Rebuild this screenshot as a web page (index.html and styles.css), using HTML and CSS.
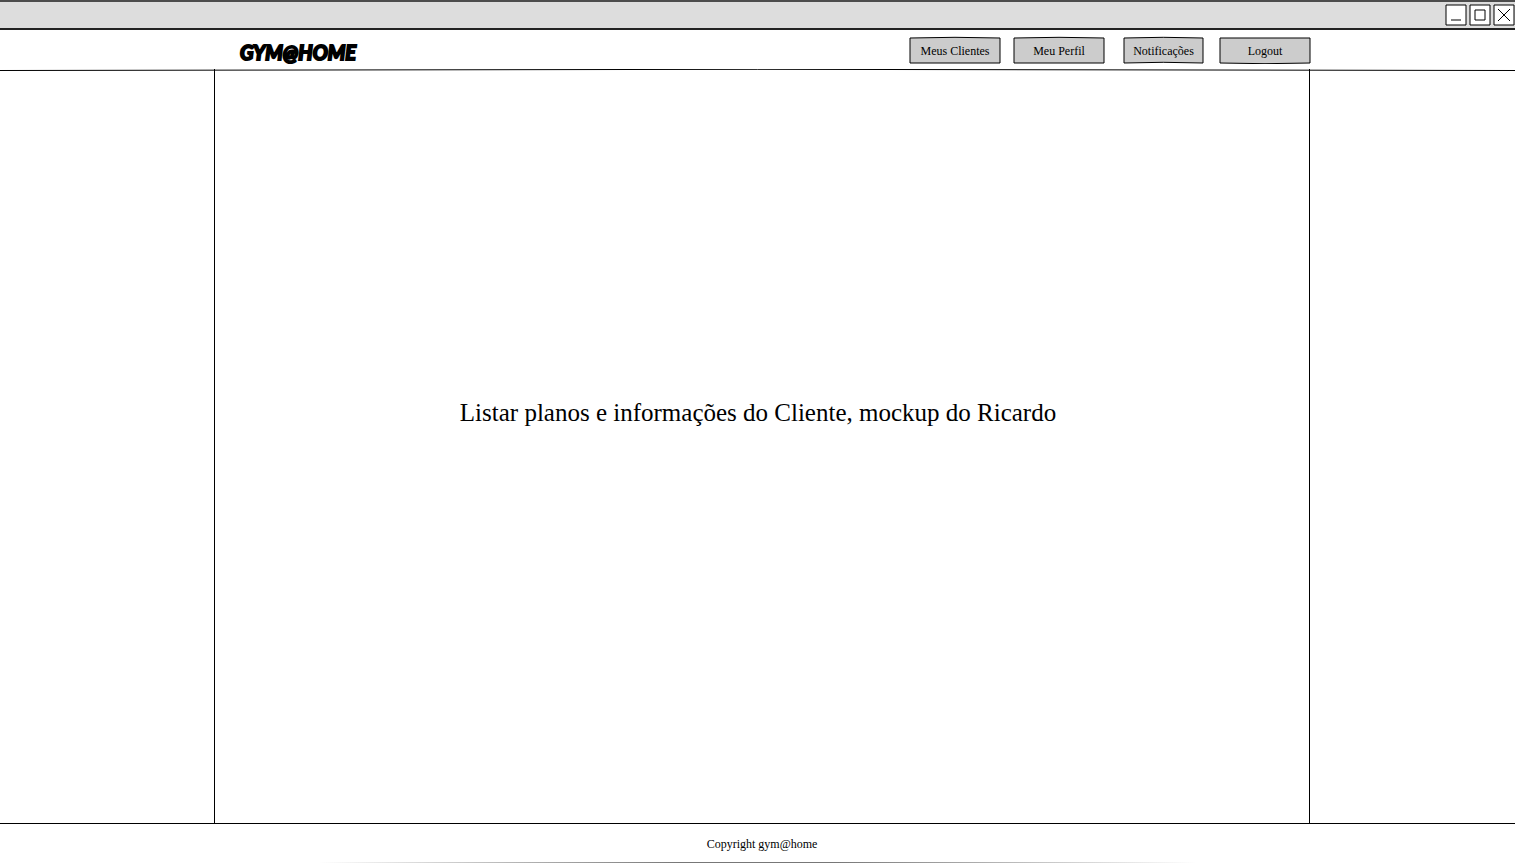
FILE: index.html
```html
<!DOCTYPE html>
<html lang="pt">
<head>
<meta charset="utf-8">
<title>gym@home</title>
<link rel="stylesheet" href="styles.css">
</head>
<body>
<div class="window">
  <div class="titlebar">
    <button class="control" type="button" aria-label="Minimizar"><svg viewBox="0 0 22 22"><path class="box" d="M1 1H21V21H1Z"/><path d="M6 16H16"/></svg></button>
    <button class="control" type="button" aria-label="Maximizar"><svg viewBox="0 0 22 22"><path class="box" d="M1 1H21V21H1Z"/><path d="M6 6H16V16H6Z"/></svg></button>
    <button class="control" type="button" aria-label="Fechar"><svg viewBox="0 0 22 22"><path class="box" d="M1 1H21V21H1Z"/><path d="M5 5L17 17M17 5L5 17"/></svg></button>
  </div>
  <header class="header">
    <a class="logo" href="#">GYM@HOME</a>
    <nav class="nav">
      <button class="nav-button" type="button"><svg class="sketch" viewBox="0 0 92 28" preserveAspectRatio="none"><path d="M1 2Q46 0.6 91 2V27H1Z"/></svg><span class="label">Meus Clientes</span></button>
      <button class="nav-button profile" type="button"><svg class="sketch" viewBox="0 0 92 28" preserveAspectRatio="none"><path d="M1 2Q46 0.6 91 2V27H1Z"/></svg><span class="label">Meu Perfil</span></button>
      <button class="nav-button notices" type="button"><svg class="sketch" viewBox="0 0 81 28" preserveAspectRatio="none"><path d="M1 2Q40 0.6 80 2V27Q40 25.6 1 27Z"/></svg><span class="label">Notificações</span></button>
      <button class="nav-button" type="button"><svg class="sketch" viewBox="0 0 92 28" preserveAspectRatio="none"><path d="M1 2H91V27Q46 28.4 1 27Z"/></svg><span class="label">Logout</span></button>
    </nav>
  </header>
  <svg class="rule" viewBox="0 0 1515 3" preserveAspectRatio="none"><path d="M0 1.5Q757 -0.9 1515 1.5"/></svg>
  <main class="main">
    <div class="content"><h1 class="message">Listar planos e informações do Cliente, mockup do Ricardo</h1></div>
  </main>
  <footer class="footer">
    <p class="copyright">Copyright gym@home</p>
    <div class="edge"></div>
  </footer>
</div>
</body>
</html>
```
FILE: styles.css
```css
* { box-sizing: border-box; }
body {
  margin: 0;
  background: #fff;
  color: #000;
  font-family: "Liberation Serif", "Times New Roman", serif;
  font-size: 12px;
}
button { border: 0; padding: 0; background: none; color: inherit; font: inherit; cursor: pointer; }
svg { display: block; fill: none; stroke: #000; stroke-width: 1; }
.window { display: flex; flex-direction: column; min-height: 100vh; }
.titlebar {
  display: flex;
  justify-content: flex-end;
  gap: 2px;
  height: 30px;
  padding-top: 2px;
  background: #ddd;
  border-top: 2px solid #4c4c4c;
  border-bottom: 2px solid #222;
}
.control { width: 22px; height: 22px; }
.control svg { width: 22px; height: 22px; }
.control .box { fill: #fff; }
.header {
  display: flex;
  justify-content: space-between;
  align-items: flex-start;
  height: 39px;
  padding: 6px 204px 0 240px;
}
.logo {
  padding-top: 1px;
  color: #000;
  font: italic 700 20px/30px Lato, sans-serif;
  text-decoration: none;
  -webkit-text-stroke: 2px #000;
}
.nav { display: flex; }
.nav-button { position: relative; width: 92px; height: 28px; margin-left: 15px; padding-top: 2px; }
.nav-button.profile { margin-left: 12px; }
.nav-button.notices { width: 81px; margin-left: 18px; }
.nav-button .label { position: relative; }
.sketch { position: absolute; inset: 0; width: 100%; height: 100%; }
.sketch path { fill: #ccc; }
.rule { width: 100%; height: 3px; margin-bottom: -3px; }
.main { display: flex; flex: 1; padding: 0 205px 0 214px; }
.content {
  flex: 1;
  display: flex;
  align-items: center;
  justify-content: center;
  padding: 0 8px 66px 0;
  border: solid #000;
  border-width: 0 1px;
}
.message { margin: 0; font-size: 25px; line-height: 30px; font-weight: 400; }
.footer {
  display: flex;
  flex-direction: column;
  justify-content: space-between;
  height: 40px;
  border-top: 1px solid #000;
}
.copyright { margin: 0; padding: 10px 205px 0 214px; line-height: 20px; text-align: center; }
.edge { height: 1px; background: linear-gradient(90deg, transparent 21%, #777 45%, #777 55%, transparent 79%); }
```
